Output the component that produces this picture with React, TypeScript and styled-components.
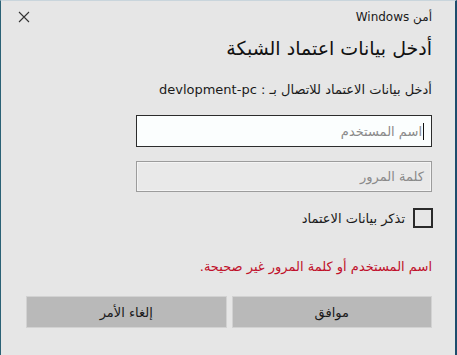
import React from 'react'
import styled, { createGlobalStyle } from 'styled-components'

const GlobalStyle = createGlobalStyle`
  html, body {
    margin: 0;
    padding: 0;
    background: #e6e6e6;
  }
  body {
    font-family: 'Segoe UI', 'DejaVu Sans', sans-serif;
  }
`

const Dialog = styled.div`
  box-sizing: border-box;
  width: 457px;
  height: 355px;
  background: #e6e6e6;
  border-left: 1px solid #2b6276;
  border-right: 2px solid #1d4d6d;
  border-top: 1px solid #c9d5dc;
  display: flex;
  flex-direction: column;
  padding: 0 23px 0 25px;
  color: #1a1a1a;
  font-family: 'Segoe UI', 'DejaVu Sans', sans-serif;
`

const TopBar = styled.div`
  display: flex;
  align-items: center;
  justify-content: space-between;
  height: 31px;
`

const Close = styled.div`
  width: 12px;
  height: 12px;
  margin-left: -8px;
  display: flex;
`

const Caption = styled.div`
  font-size: 12px;
  color: #1a1a1a;
`

const Title = styled.div`
  font-size: 19px;
  height: 32px;
  line-height: 32px;
  color: #111;
`

const Subtitle = styled.div`
  margin-top: 14px;
  font-size: 13px;
  line-height: 24px;
`

const Field = styled.div<{ $active?: boolean }>`
  box-sizing: border-box;
  margin-top: ${(p) => (p.$active ? '13px' : '14px')};
  width: 296px;
  height: ${(p) => (p.$active ? '32px' : '31px')};
  border: 1px solid ${(p) => (p.$active ? '#2c2c2c' : '#9c9c9c')};
  background: ${(p) => (p.$active ? '#fbfefe' : '#e9e9e9')};
  box-shadow: ${(p) => (p.$active ? 'none' : 'inset 0 0 0 1px #f4f4f4')};
  display: flex;
  align-items: center;
  padding: 0 7px 0 8px;
  font-size: 13px;
  color: #8a8a8a;
  align-self: flex-start;
`

const Caret = styled.span`
  display: inline-block;
  width: 1px;
  height: 17px;
  background: #111;
  margin-left: 1px;
`

const CheckRow = styled.label`
  display: flex;
  align-items: center;
  gap: 8px;
  margin-top: 16px;
  font-size: 13px;
`

const Box = styled.span`
  box-sizing: border-box;
  width: 20px;
  height: 20px;
  border: 2px solid #2a2a2a;
  margin-right: -1px;
`

const ErrorText = styled.div`
  margin-top: 27px;
  font-size: 13px;
  color: #c0102a;
  line-height: 24px;
`

const Buttons = styled.div`
  margin-top: 17px;
  display: flex;
  gap: 5px;
`

const Button = styled.div`
  box-sizing: border-box;
  width: 201px;
  height: 32px;
  background: #b9b9b9;
  border: 1px solid #d2d2d2;
  display: flex;
  align-items: center;
  justify-content: center;
  font-size: 13px;
  color: #1a1a1a;
`

export default function App() {
  return (
    <>
      <GlobalStyle />
      <Dialog dir="rtl">
        <TopBar>
          <Caption>أمن Windows</Caption>
          <Close>
            <svg width="12" height="12" viewBox="0 0 12 12">
              <path d="M1 1L11 11M11 1L1 11" stroke="#333" strokeWidth="1.1" />
            </svg>
          </Close>
        </TopBar>
        <Title>أدخل بيانات اعتماد الشبكة</Title>
        <Subtitle>أدخل بيانات الاعتماد للاتصال بـ : devlopment-pc</Subtitle>
        <Field $active>
          <Caret />
          اسم المستخدم
        </Field>
        <Field>كلمة المرور</Field>
        <CheckRow>
          <Box />
          تذكر بيانات الاعتماد
        </CheckRow>
        <ErrorText>اسم المستخدم أو كلمة المرور غير صحيحة.</ErrorText>
        <Buttons>
          <Button>موافق</Button>
          <Button>إلغاء الأمر</Button>
        </Buttons>
      </Dialog>
    </>
  )
}
